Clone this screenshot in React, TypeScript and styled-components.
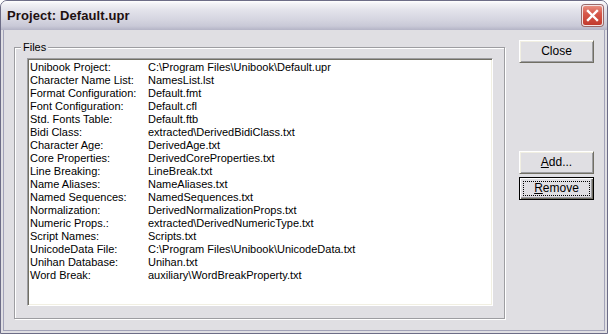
import styled, { createGlobalStyle } from "styled-components";

const files: [string, string][] = [
	["Unibook Project:", "C:\\Program Files\\Unibook\\Default.upr"],
	["Character Name List:", "NamesList.lst"],
	["Format Configuration:", "Default.fmt"],
	["Font Configuration:", "Default.cfl"],
	["Std. Fonts Table:", "Default.ftb"],
	["Bidi Class:", "extracted\\DerivedBidiClass.txt"],
	["Character Age:", "DerivedAge.txt"],
	["Core Properties:", "DerivedCoreProperties.txt"],
	["Line Breaking:", "LineBreak.txt"],
	["Name Aliases:", "NameAliases.txt"],
	["Named Sequences:", "NamedSequences.txt"],
	["Normalization:", "DerivedNormalizationProps.txt"],
	["Numeric Props.:", "extracted\\DerivedNumericType.txt"],
	["Script Names:", "Scripts.txt"],
	["UnicodeData File:", "C:\\Program Files\\Unibook\\UnicodeData.txt"],
	["Unihan Database:", "Unihan.txt"],
	["Word Break:", "auxiliary\\WordBreakProperty.txt"],
];

export default function App() {
	return (
		<>
			<GlobalStyle />
			<Window>
				<TitleBar>
					<Title>Project: Default.upr</Title>
					<CloseBox>
						<svg width="13" height="13" viewBox="0 0 13 13">
							<path d="M2 2 L11 11 M11 2 L2 11" stroke="#fff" strokeWidth="2.4" strokeLinecap="square" />
						</svg>
					</CloseBox>
				</TitleBar>

				<Client>
					<FilesGroup>
						<Legend>Files</Legend>
						<ListBox>
							{files.map(([label, value]) => (
								<Row key={label}>
									<RowLabel>{label}</RowLabel>
									<span>{value}</span>
								</Row>
							))}
						</ListBox>
					</FilesGroup>

					<ButtonColumn>
						<DialogButton>
							<Caption>Close</Caption>
						</DialogButton>
						<DialogButton $gapTop={88}>
							<Caption><u>A</u>dd...</Caption>
						</DialogButton>
						<DialogButton $gapTop={3} $focused>
							<Caption $focused><u>R</u>emove</Caption>
						</DialogButton>
					</ButtonColumn>
				</Client>
			</Window>
		</>
	);
}

const GlobalStyle = createGlobalStyle`
	html, body {
		margin: 0;
		padding: 0;
		background: #ffffff;
	}
	* {
		box-sizing: border-box;
	}
`;

const Window = styled.div`
	width: 608px;
	height: 334px;
	display: flex;
	flex-direction: column;
	background: #e0dfe3;
	border: 1px solid #6d6d87;
	border-radius: 7px 7px 0 0;
	overflow: hidden;
	font-family: "Liberation Sans", Arial, sans-serif;
	font-size: 11px;
	color: #000;
`;

const TitleBar = styled.div`
	height: 29px;
	flex: none;
	display: flex;
	align-items: center;
	justify-content: space-between;
	padding: 0 4px 1px 6px;
	background: linear-gradient(
		to bottom,
		#ffffff 0px,
		#f1f1f5 3px,
		#e3e3eb 9px,
		#d6d6e1 18px,
		#c9c9d7 25px,
		#b4b4c6 29px
	);
`;

const Title = styled.span`
	font-size: 13px;
	font-weight: bold;
	color: #1e1010;
	letter-spacing: 0.1px;
`;

const CloseBox = styled.span`
	width: 21px;
	height: 21px;
	display: flex;
	align-items: center;
	justify-content: center;
	border: 1px solid #f4e4e4;
	border-radius: 3px;
	background: linear-gradient(to bottom, #e88f80 0%, #d6584a 40%, #c23a2e 100%);
	box-shadow: 0 0 0 1px #9a6a6a;
`;

const Client = styled.div`
	flex: 1;
	display: flex;
	align-items: stretch;
	margin: 0 2px 2px;
	padding: 10px 9px 11px 10px;
	border: 1px solid #a2a2b8;
	border-top: none;
`;

const FilesGroup = styled.fieldset`
	width: 491px;
	margin: 1px 14px 0 0;
	padding: 4px 11px 12px 12px;
	display: flex;
	flex-direction: column;
	border: 1px solid #9d9da1;
	box-shadow: inset 1px 1px 0 #ffffff, 1px 1px 0 #ffffff;
`;

const Legend = styled.legend`
	margin-left: -6px;
	padding: 0 2px;
	line-height: 13px;
	background: #e0dfe3;
`;

const ListBox = styled.div`
	flex: 1;
	padding: 2px 2px;
	background: #ffffff;
	border-style: solid;
	border-width: 1px;
	border-color: #9d9da1 #ffffff #ffffff #9d9da1;
	box-shadow: inset 1px 1px 0 #716f64, inset -1px -1px 0 #f1efe2;
`;

const Row = styled.div`
	display: flex;
	height: 13px;
	line-height: 13px;
	white-space: nowrap;
`;

const RowLabel = styled.span`
	width: 118px;
	flex: none;
`;

const ButtonColumn = styled.div`
	width: 75px;
	display: flex;
	flex-direction: column;
`;

const DialogButton = styled.div<{ $gapTop?: number; $focused?: boolean }>`
	height: 23px;
	margin-top: ${(p) => p.$gapTop ?? 0}px;
	display: flex;
	padding: ${(p) => (p.$focused ? "3px" : "2px")};
	background: #e0dfe3;
	border: 1px solid;
	border-color: ${(p) => (p.$focused ? "#000 #000 #000 #000" : "#ffffff #716f64 #716f64 #ffffff")};
	box-shadow: ${(p) =>
		p.$focused
			? "inset 1px 1px 0 #ffffff, inset -1px -1px 0 #716f64, inset -2px -2px 0 #9d9da1"
			: "inset 1px 1px 0 #f1efe2, inset -1px -1px 0 #9d9da1"};
`;

const Caption = styled.span<{ $focused?: boolean }>`
	flex: 1;
	display: flex;
	align-items: center;
	justify-content: center;
	border: 1px dotted ${(p) => (p.$focused ? "#000" : "transparent")};
	font-size: 12px;
	line-height: 13px;
	u {
		text-underline-offset: 1px;
	}
`;
